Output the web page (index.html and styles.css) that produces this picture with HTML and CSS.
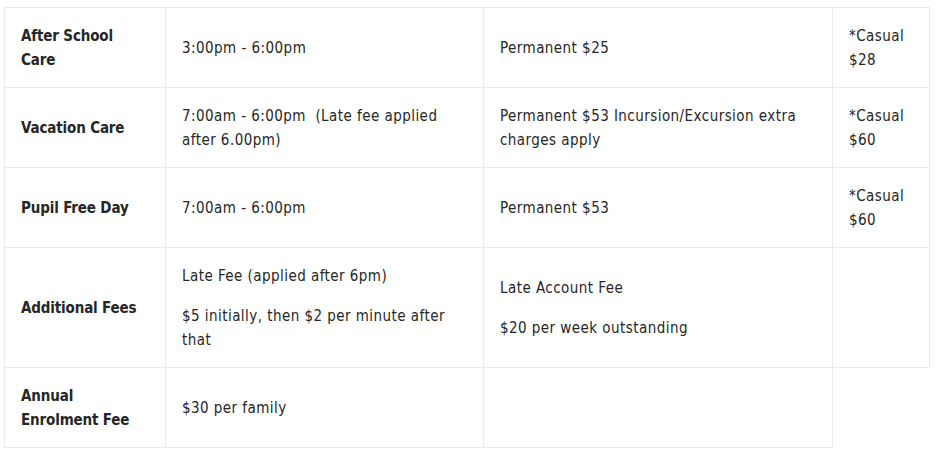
FILE: index.html
```html
<!DOCTYPE html>
<html>
<head>
<meta charset="utf-8">
<link rel="stylesheet" href="styles.css">
</head>
<body>
<table class="fees">
  <colgroup>
    <col class="c1"><col class="c2"><col class="c3"><col class="c4">
  </colgroup>
  <tbody>
    <tr>
      <th>After School Care</th>
      <td>3:00pm - 6:00pm</td>
      <td>Permanent $25</td>
      <td>*Casual $28</td>
    </tr>
    <tr>
      <th>Vacation Care</th>
      <td>7:00am - 6:00pm&nbsp; (Late fee applied after 6.00pm)</td>
      <td>Permanent $53 Incursion/Excursion extra charges apply</td>
      <td>*Casual $60</td>
    </tr>
    <tr>
      <th>Pupil Free Day</th>
      <td>7:00am - 6:00pm</td>
      <td>Permanent $53</td>
      <td>*Casual $60</td>
    </tr>
    <tr>
      <th>Additional Fees</th>
      <td><p>Late Fee (applied after 6pm)</p><p>$5 initially, then $2 per minute after that</p></td>
      <td><p>Late Account Fee</p><p>$20 per week outstanding</p></td>
      <td></td>
    </tr>
    <tr class="last">
      <th>Annual Enrolment Fee</th>
      <td>$30 per family</td>
      <td></td>
    </tr>
  </tbody>
</table>
</body>
</html>
```

FILE: styles.css
```css
html, body {
  margin: 0;
  padding: 0;
  background: #ffffff;
}
body {
  font-family: "DejaVu Sans Condensed", "DejaVu Sans", sans-serif;
  font-stretch: condensed;
  font-size: 15px;
  line-height: 24px;
  letter-spacing: 0.45px;
  color: #262626;
}
.fees {
  border-collapse: collapse;
  table-layout: fixed;
  width: 925px;
  margin: 7px 0 0 4px;
}
.c1 { width: 161px; }
.c2 { width: 318px; }
.c3 { width: 349px; }
.c4 { width: 97px; }
.fees th,
.fees td {
  border: 1px solid #ebebeb;
  padding: 16px 16px 15px 16px;
  vertical-align: middle;
  text-align: left;
  height: 48px;
}
.fees th {
  font-weight: bold;
  letter-spacing: -0.15px;
}
.fees p {
  margin: 0 0 16px 0;
}
.fees p:last-child {
  margin-bottom: 0;
}
```
